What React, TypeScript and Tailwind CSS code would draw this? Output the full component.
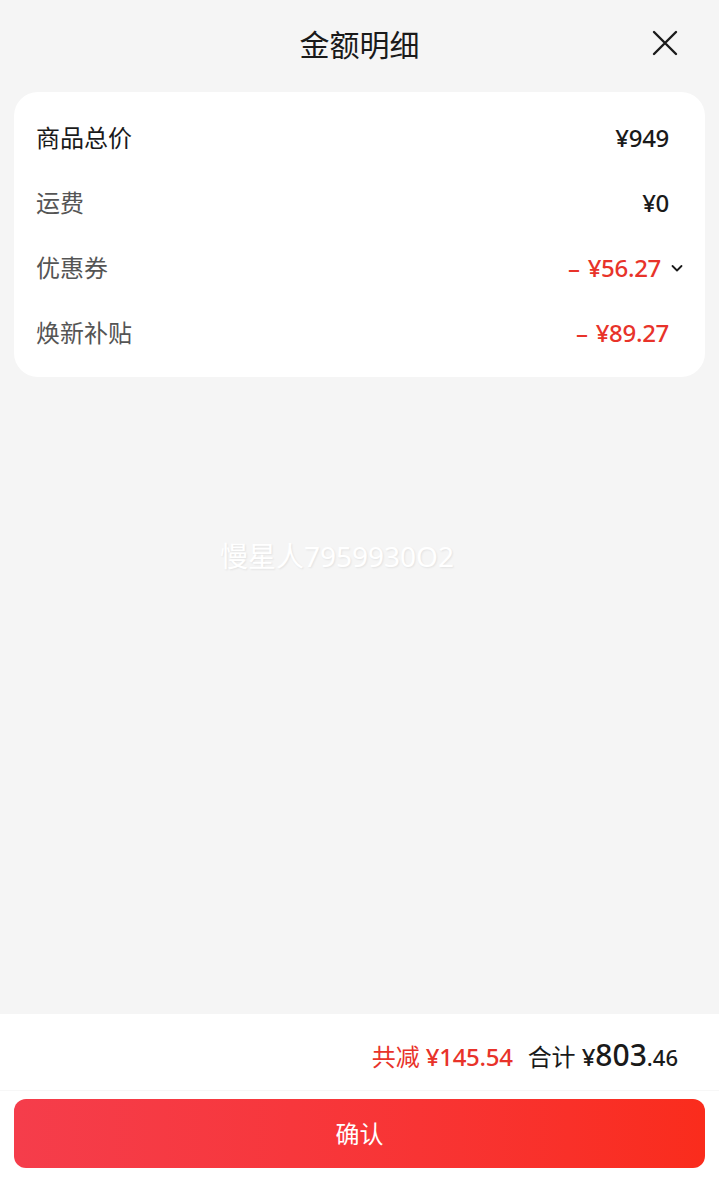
import React from "react";

const font = { fontFamily: '"Noto Sans", "Noto Sans CJK SC", sans-serif' };

function Row({ label, value, red, chevron, dark }: { label: string; value: React.ReactNode; red?: boolean; chevron?: boolean; dark?: boolean }) {
  return (
    <div className="flex h-[65px] items-center justify-between">
      <span className={`text-[24px] ${dark ? "text-[#1a1a1a]" : "text-[#555555]"}`}>{label}</span>
      <div className="flex items-center">
        <span className={`text-[24px] font-medium tracking-[-0.3px] ${red ? "text-[#e8332a]" : "text-[#1a1a1a]"}`}>{value}</span>
        {chevron ? (
          <svg width="14" height="14" viewBox="0 0 14 14" className="ml-[9px] mr-[-15px]">
            <path d="M2.5 5 L7 9.5 L11.5 5" fill="none" stroke="#1a1a1a" strokeWidth="1.8" strokeLinecap="round" strokeLinejoin="round" />
          </svg>
        ) : null}
      </div>
    </div>
  );
}

export default function App() {
  return (
    <div className="flex h-[1183px] w-[719px] flex-col bg-[#f5f5f5]" style={font}>
      <div className="relative flex h-[88px] items-center justify-center">
        <span className="text-[30px] text-[#1a1a1a]">金额明细</span>
        <svg width="26" height="26" viewBox="0 0 26 26" className="absolute right-[41px] top-[30px]">
          <path d="M2 2 L24 24 M24 2 L2 24" stroke="#1a1a1a" strokeWidth="2.4" strokeLinecap="round" />
        </svg>
      </div>
      <div className="mx-[14px] mt-[4px] rounded-[24px] bg-white pb-[12px] pl-[22px] pr-[36px] pt-[13px]">
        <Row label="商品总价" value="¥949" dark />
        <Row label="运费" value="¥0" />
        <Row label="优惠券" value={<><span className="mr-[8px]">–</span>¥56.27</>} red chevron />
        <Row label="焕新补贴" value={<><span className="mr-[8px]">–</span>¥89.27</>} red />
      </div>
      <div className="relative flex-1">
        <span className="absolute left-[220px] top-[158px] text-[28px] text-white [text-shadow:1px_1px_2px_rgba(0,0,0,0.08)]">慢星人79599​30O2</span>
      </div>
      <div className="bg-white">
        <div className="flex h-[76px] items-baseline justify-end pr-[41px] pt-[18px]">
          <span className="text-[24px] text-[#e8332a]">共减</span>
          <span className="ml-[6px] text-[24px] font-medium tracking-[-0.3px] text-[#e8332a]">¥145.54</span>
          <span className="ml-[15px] text-[24px] text-[#1a1a1a]">合计</span>
          <span className="ml-[6px] text-[24px] font-medium text-[#1a1a1a]">¥</span>
          <span className="text-[30px] font-medium text-[#1a1a1a]">803</span>
          <span className="text-[22px] font-medium text-[#1a1a1a]">.46</span>
        </div>
        <div className="h-px bg-[#f7f7f7]" />
        <div className="px-[14px] pb-[15px] pt-[8px]">
          <button className="flex h-[69px] w-full items-center justify-center rounded-[12px] bg-gradient-to-r from-[#f53d4b] to-[#fa2c1c] text-[24px] text-white">
            确认
          </button>
        </div>
      </div>
    </div>
  );
}
